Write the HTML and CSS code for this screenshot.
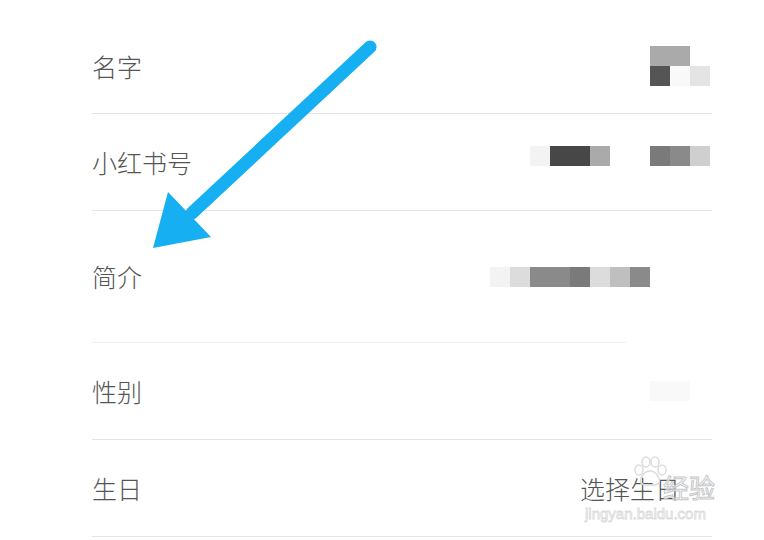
FILE: index.html
```html
<!DOCTYPE html>
<html lang="zh-CN">
<head>
    <meta charset="UTF-8">
    <meta name="viewport" content="width=device-width, initial-scale=1.0">
    <title>编辑资料</title>
    <link rel="stylesheet" href="styles.css">
</head>
<body>
    <div class="page">
        <ul class="list">
            <li class="row row-name">
                <span class="label">名字</span>
                <div class="mosaic">
                    <div class="line"><i class="px"></i><i class="px s6"></i><i class="px s6"></i><i class="px"></i></div>
                    <div class="line"><i class="px"></i><i class="px s9"></i><i class="px s0"></i><i class="px s2"></i></div>
                </div>
            </li>
            <li class="row">
                <span class="label">小红书号</span>
                <div class="mosaic up">
                    <div class="line"><i class="px s1"></i><i class="px s10"></i><i class="px s10"></i><i class="px s6"></i><i class="px"></i><i class="px"></i><i class="px s8"></i><i class="px s7"></i><i class="px s4"></i></div>
                </div>
            </li>
            <li class="row row-intro">
                <span class="label">简介</span>
                <div class="mosaic intro">
                    <div class="line"><i class="px s1"></i><i class="px s3"></i><i class="px s7"></i><i class="px s7"></i><i class="px s8"></i><i class="px s3"></i><i class="px s5"></i><i class="px s7"></i></div>
                </div>
            </li>
            <li class="row">
                <span class="label">性别</span>
                <div class="mosaic">
                    <div class="line"><i class="px s0"></i><i class="px s0"></i><i class="px"></i></div>
                </div>
            </li>
            <li class="row">
                <span class="label">生日</span>
                <span class="value">选择生日</span>
            </li>
        </ul>

        <div class="watermark">
            <svg class="paw" width="36" height="32" viewBox="0 0 36 32">
                <g fill="none" stroke="#dcdcdc" stroke-width="1.5">
                    <ellipse cx="7" cy="14" rx="4" ry="5"/>
                    <ellipse cx="14" cy="6" rx="4" ry="5"/>
                    <ellipse cx="23" cy="6" rx="4" ry="5"/>
                    <ellipse cx="30" cy="14" rx="4" ry="5"/>
                    <path d="M18 15c-6 0-11 8-9 12 2 3 6 2 9 2s7 1 9-2c2-4-3-12-9-12z"/>
                </g>
            </svg>
            <span class="wm-text">经验</span>
            <span class="wm-url">jingyan.baidu.com</span>
        </div>

        <svg class="arrow" width="764" height="540" viewBox="0 0 764 540">
            <line x1="370" y1="47" x2="192" y2="213" stroke="#16b0f2" stroke-width="13" stroke-linecap="round"/>
            <polygon points="153,248 168,192 211,237" fill="#16b0f2"/>
        </svg>
    </div>
</body>
</html>
```

FILE: styles.css
```css
body {
    margin: 0;
    background: #fff;
    font-family: "Noto Sans CJK SC", "Noto Sans", sans-serif;
    color: #555;
}

.page {
    position: relative;
    width: 764px;
    height: 540px;
    overflow: hidden;
}

.list {
    list-style: none;
    margin: 0;
    padding: 19px 52px 0 92px;
}

.row {
    display: flex;
    align-items: center;
    justify-content: space-between;
    height: 96px;
    border-bottom: 1px solid #e4e4e4;
}

.row-name {
    height: 94px;
}

.row-intro {
    height: 131px;
    border-bottom-color: #f0f0f0;
    border-image: linear-gradient(to right, #efefef 86%, transparent 86%) 1;
}

.label {
    font-size: 25px;
    font-weight: 300;
    line-height: 1;
    color: #555;
}

.value {
    font-size: 25px;
    font-weight: 300;
    line-height: 1;
    color: #555;
    margin-right: 32px;
}

.mosaic {
    display: flex;
    flex-direction: column;
    margin-right: 2px;
}

.mosaic.up {
    margin-bottom: 12px;
}

.mosaic.intro {
    margin-right: 62px;
}

.line {
    display: flex;
}

.px {
    display: block;
    width: 20px;
    height: 20px;
}

.s0 { background: #f9f9f9; }
.s1 { background: #f3f3f3; }
.s2 { background: #e4e4e4; }
.s3 { background: #dcdcdc; }
.s4 { background: #cfcfcf; }
.s5 { background: #bfbfbf; }
.s6 { background: #aaaaaa; }
.s7 { background: #8a8a8a; }
.s8 { background: #7a7a7a; }
.s9 { background: #555555; }
.s10 { background: #474747; }

.watermark {
    position: absolute;
    left: 585px;
    top: 456px;
    width: 140px;
    height: 66px;
}

.paw {
    position: absolute;
    left: 47px;
    top: 0;
}

.wm-text {
    position: absolute;
    left: 78px;
    top: 18px;
    font-size: 26px;
    line-height: 1;
    color: rgba(255, 255, 255, 0.6);
    -webkit-text-stroke: 1px #c8c8c8;
}

.wm-url {
    position: absolute;
    left: 0;
    top: 50px;
    font-family: "Liberation Sans", sans-serif;
    font-size: 15px;
    line-height: 1;
    color: #fff;
    -webkit-text-stroke: 0.8px #dadada;
}

.arrow {
    position: absolute;
    left: 0;
    top: 0;
}
```
